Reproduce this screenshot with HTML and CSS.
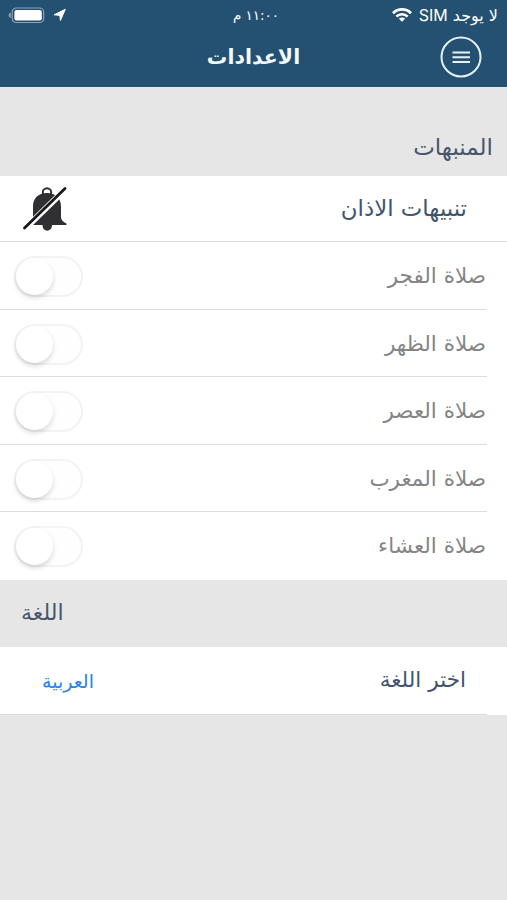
FILE: index.html
```html
<!DOCTYPE html>
<html lang="ar" dir="rtl">
<head>
<meta charset="utf-8">
<title>الاعدادات</title>
<link rel="stylesheet" href="styles.css">
</head>
<body>
<header class="top">
  <div class="status">
    <div class="carrier"><span>لا يوجد <span class="sim">SIM</span></span>
      <svg width="20" height="14" viewBox="0 0 20 14" fill="none" stroke="#fff" stroke-width="2.7"><path d="M1 5.200a12.700 12.700 0 0 1 18 0M4.400 8.600a7.900 7.900 0 0 1 11.200 0"/><path d="M10 13.800 6.900 10.700a4.400 4.400 0 0 1 6.200 0z" fill="#fff" stroke="none"/></svg>
    </div>
    <div class="clock">١١:٠٠ م</div>
    <div class="power">
      <svg width="13" height="14" viewBox="0 0 13 14"><path d="M12.300 1.300 7.400 12.500 6.900 7.400 1.200 6.800z" fill="#fff" stroke="#fff" stroke-linejoin="round"/></svg>
      <svg width="37" height="17" viewBox="0 0 37 17"><rect x="4.200" y="1" width="31.500" height="14.500" rx="4" fill="none" stroke="#8ba3b8" stroke-width="1.200"/><rect x="6.400" y="3" width="27.400" height="10.600" rx="2" fill="#fff"/><path d="M2.800 5.800v5C-.2 10.300-.2 6.300 2.800 5.800z" fill="#8ba3b8"/></svg>
    </div>
  </div>
  <div class="nav">
    <svg class="menu" width="42" height="42" viewBox="0 0 42 42" fill="none" stroke="#e5f2fa"><circle cx="21" cy="21" r="19.500" stroke-width="2"/><path d="M12.500 16.500h17.500M12.500 21.200h17.500M12.500 26h17.500" stroke-width="1.900"/></svg>
    <h1>الاعدادات</h1>
  </div>
</header>
<main>
  <h2 class="section alerts">المنبهات</h2>
  <div class="row main-row">
    <span class="label">تنبيهات الاذان</span>
    <svg class="bell" width="46" height="46" viewBox="0 0 46 46"><circle cx="25" cy="6.500" r="4.200" fill="none" stroke="#2e2e30" stroke-width="2"/><path d="M25 7c-9 0-14 5.500-14 13.500v11.500c0 3-1.500 4.500-4 7h13.500c0 7.500 9.500 7.500 9.500 0h14.500v-1.500c-3.500-1.500-5.500-3.500-5.500-6.500V20.500c0-8-5-13.500-14-13.500z" fill="#303032"/><path d="M3 42.700 44 2.700" stroke="#fff" stroke-width="6"/><path d="M2.500 42 43 2.500" stroke="#19191b" stroke-width="2.800" stroke-linecap="round"/></svg>
  </div>
  <div class="row prayer"><span class="label">صلاة الفجر</span><span class="switch"></span></div>
  <div class="row prayer"><span class="label">صلاة الظهر</span><span class="switch"></span></div>
  <div class="row prayer"><span class="label">صلاة العصر</span><span class="switch"></span></div>
  <div class="row prayer"><span class="label">صلاة المغرب</span><span class="switch"></span></div>
  <div class="row prayer last"><span class="label">صلاة العشاء</span><span class="switch"></span></div>
  <h2 class="section language">اللغة</h2>
  <div class="row choose"><span class="label">اختر اللغة</span><span class="value">العربية</span></div>
</main>
</body>
</html>
```
FILE: styles.css
```css
* { box-sizing: border-box; }
body { margin: 0; height: 900px; background: #e6e6e6; font-family: "DejaVu Sans", sans-serif; overflow: hidden; }
.top { height: 87px; background: #245071; color: #fff; }
.status { height: 30px; display: grid; grid-template-columns: 1fr 60px 1fr; align-items: center; padding: 0 9px 0 8px; font-size: 15px; }
.carrier { display: flex; align-items: center; gap: 7px; font-size: 16px; white-space: nowrap; }
.sim { font-family: "Inter", sans-serif; font-size: 16px; }
.clock { font-size: 13.5px; padding-left: 6px; text-align: center; white-space: nowrap; }
.power { display: flex; justify-content: flex-end; align-items: center; gap: 8px; }
.nav { height: 57px; display: grid; grid-template-columns: 42px 1fr 42px; padding: 6px 25px 0; align-items: start; }
h1 { margin: 0; font-size: 20.5px; line-height: 42px; text-align: center; color: #f2f8fc; }
h2 { margin: 0; font-weight: 400; font-size: 22px; color: #48566b; }
.section { display: flex; align-items: center; }
.alerts { height: 89px; padding: 31px 14px 0; font-size: 23px; }
.language { height: 67px; justify-content: flex-end; padding: 0 0 2px 21px; }
.row { display: flex; justify-content: space-between; align-items: center; background: #fff; font-size: 21.6px; color: #43546e; white-space: nowrap; }
.main-row { height: 66px; border-bottom: 1px solid #dedede; padding: 0 40px 0 22px; font-size: 22.9px; }
.main-row .label, .choose .label { padding-bottom: 2px; }
.prayer { height: 67.5px; padding: 0 21px 0 14px; font-size: 21.5px; color: #858585; background: linear-gradient(#dcdcdc, #dcdcdc) left bottom / 487px 1px no-repeat #fff; }
.last { background: #fff; }
.switch { width: 69px; height: 41px; margin-top: 2px; border: 2px solid #f3f3f3; border-radius: 21px; background: #fefefe; }
.switch::before { content: ""; display: block; width: 37px; height: 37px; margin-right: auto; border-radius: 50%; background: #fff; box-shadow: 0 3px 5px rgba(0,0,0,.15); }
.choose { height: 68px; padding: 0 41px 0 42px; background: linear-gradient(#dcdcdc, #dcdcdc) left bottom / 487px 1px no-repeat #fff; }
.value { font-size: 19px; color: #2385ee; }
```
